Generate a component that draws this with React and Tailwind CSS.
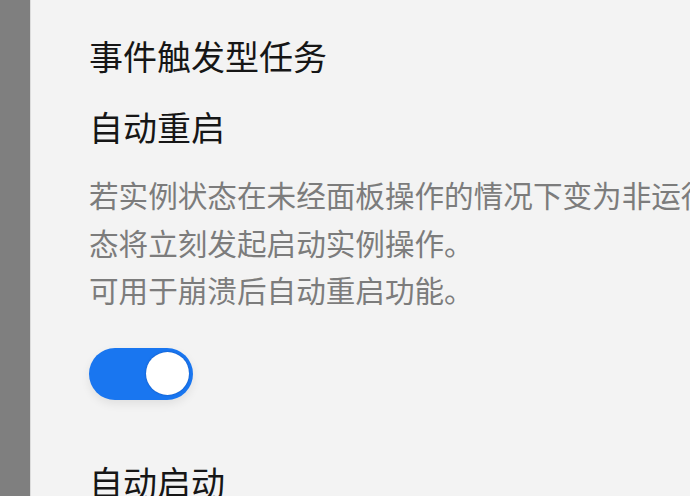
import React, { useState } from 'react';

const font = { fontFamily: '"Noto Sans CJK SC", "Noto Sans", sans-serif' };

const Toggle = ({ checked, onChange }) => (
  <button
    onClick={() => onChange(!checked)}
    className={`relative w-[104px] h-[52px] rounded-full shadow-[0_4px_10px_rgba(0,0,0,0.08)] ${
      checked ? 'bg-[#1976f0]' : 'bg-[#d6d6d6]'
    }`}
  >
    <span
      className={`absolute top-[4.5px] w-[43px] h-[43px] rounded-full bg-white shadow-[0_0_2px_rgba(0,40,120,0.5)] ${
        checked ? 'right-[4px]' : 'left-[4px]'
      }`}
    />
  </button>
);

export default function App() {
  const [autoRestart, setAutoRestart] = useState(true);

  return (
    <div className="flex w-[690px] h-[496px] overflow-hidden bg-[#f3f3f3]" style={font}>
      <div className="w-[30px] shrink-0 bg-[#7f7f7f]" />
      <div className="w-px shrink-0 bg-[#dcdcdc]" />
      <div className="flex flex-col shrink-0 w-[700px] pl-[58px] pt-[33px]">
        <h2 className="text-[34px] leading-[46px] text-[#161616]">事件触发型任务</h2>

        <h3 className="mt-[25px] text-[34px] leading-[46px] text-[#161616]">自动重启</h3>
        <p className="mt-[21px] w-[660px] text-[29.6px] leading-[47.5px] text-[#7c7c7c]">
          若实例状态在未经面板操作的情况下变为非运行状态将立刻发起启动实例操作。
          <br />
          可用于崩溃后自动重启功能。
        </p>
        <div className="mt-[34px]">
          <Toggle checked={autoRestart} onChange={setAutoRestart} />
        </div>

        <h3 className="mt-[54px] text-[34px] leading-[46px] text-[#161616]">自动启动</h3>
      </div>
    </div>
  );
}
